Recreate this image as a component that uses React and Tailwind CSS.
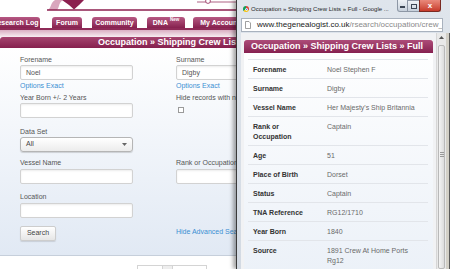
import React from 'react';

const tabs = [
  { label: 'Research Log', cls: 'ml-[-9px] w-[49px]' },
  { label: 'Forum', cls: 'ml-[12px] w-[30px]' },
  { label: 'Community', cls: 'ml-[10px] w-[45px]' },
  { label: 'DNA', sup: 'New', cls: 'ml-[10px] w-[38px]' },
  { label: 'My Account', cls: 'ml-[8px] w-[54px]' },
];

const details = [
  ['Forename', 'Noel Stephen F'],
  ['Surname', 'Digby'],
  ['Vessel Name', "Her Majesty's Ship Britannia"],
  ['Rank or\nOccupation', 'Captain'],
  ['Age', '51'],
  ['Place of Birth', 'Dorset'],
  ['Status', 'Captain'],
  ['TNA Reference', 'RG12/1710'],
  ['Year Born', '1840'],
  ['Source', '1891 Crew At Home Ports\nRg12'],
];

const Label = ({ children, className = '' }) => (
  <div className={`text-[7px] leading-[10px] text-[#555] ${className}`}>{children}</div>
);

const TextBox = ({ value, className = '' }) => (
  <div
    className={`h-[15px] w-[113px] rounded-[2px] border border-[#d2d2d2] bg-white pl-[5px] text-[7px] leading-[13px] text-[#555] shadow-[inset_0_1px_2px_rgba(0,0,0,0.08)] ${className}`}
  >
    {value}
  </div>
);

const LinkText = ({ children }) => (
  <div className="text-[7px] leading-[11px] text-[#3b8fd3]">{children}</div>
);

const SearchPage = () => (
  <div className="w-[450px]">
    {/* logo strip */}
    <div className="h-[17px]">
      <svg width="240" height="17" viewBox="0 0 240 17">
        <path d="M48 10 C52 7 50 3 55 0 L63 0 C58 3 60 7 57 10 Z" fill="#d9a6bd" />
        <path d="M62 0 L84 0 L79 5 L74 9.5 L69 5 Z" fill="#8c1f4f" />
        <line x1="47" y1="10" x2="240" y2="10" stroke="#8c1f4f" strokeWidth="1.4" />
        <line x1="197" y1="2" x2="240" y2="2" stroke="#9b3a66" strokeWidth="0.8" />
        <circle cx="208" cy="1" r="2.4" fill="white" stroke="#9b3a66" strokeWidth="0.9" />
      </svg>
    </div>

    {/* nav tabs */}
    <div className="flex h-[11px]">
      {tabs.map(t => (
        <div
          key={t.label}
          className={`${t.cls} flex shrink-0 items-center justify-center rounded-t-[3px] bg-gradient-to-b from-[#b65883] to-[#86204f] text-[7px] font-bold leading-none whitespace-nowrap text-white`}
        >
          {t.label}
          {t.sup && <span className="mb-[4px] ml-[2px] text-[4.5px]">{t.sup}</span>}
        </div>
      ))}
    </div>
    <div className="h-[2px] bg-[#8e2a57]" />
    <div className="h-[7px] bg-gradient-to-b from-[#d9aec2] to-[#f7eef2]" />
    <div className="h-[11px] rounded-t-[3px] bg-gradient-to-b from-[#a5446f] to-[#86204e] pl-[98px] text-[9px] font-bold leading-[11px] whitespace-nowrap text-white">
      Occupation » Shipping Crew Lists
    </div>

    {/* form */}
    <div className="h-[208px] border-b border-[#c6cfdb] bg-gradient-to-b from-white to-[#e1e9f4] px-[20px] pt-[7px]">
      <div className="flex gap-x-[43px]">
        <div>
          <Label>Forename</Label>
          <TextBox value="Noel" />
          <LinkText>Options Exact</LinkText>
        </div>
        <div>
          <Label>Surname</Label>
          <TextBox value="Digby" />
          <LinkText>Options Exact</LinkText>
        </div>
      </div>
      <div className="mt-[2px] flex gap-x-[43px]">
        <div>
          <Label>Year Born +/- 2 Years</Label>
          <TextBox value="" />
        </div>
        <div>
          <Label className="whitespace-nowrap">Hide records with no date</Label>
          <div className="mt-[4px] ml-[2px] h-[6px] w-[6px] border border-[#9a9a9a] bg-white" />
        </div>
      </div>
      <div className="mt-[9px]">
        <Label>Data Set</Label>
        <div className="flex h-[15px] w-[113px] items-center justify-between rounded-[3px] border border-[#b5b5b5] bg-gradient-to-b from-white to-[#ececec] px-[5px] text-[7px] text-[#444] shadow-[0_1px_1px_rgba(0,0,0,0.15)]">
          <span>All</span>
          <svg width="5" height="3" viewBox="0 0 5 3">
            <path d="M0 0 L5 0 L2.5 3 Z" fill="#666" />
          </svg>
        </div>
      </div>
      <div className="mt-[6px] flex gap-x-[43px]">
        <div>
          <Label>Vessel Name</Label>
          <TextBox value="" className="mt-[1px]" />
        </div>
        <div>
          <Label className="whitespace-nowrap">Rank or Occupation</Label>
          <TextBox value="" className="mt-[1px]" />
        </div>
      </div>
      <div className="mt-[8px]">
        <Label>Location</Label>
        <TextBox value="" className="mt-[1px] h-[14px]" />
      </div>
      <div className="mt-[8px] flex items-start gap-x-[43px]">
        <div className="w-[113px]">
          <div className="flex h-[15px] w-[36px] items-center justify-center rounded-[2px] border border-[#cdcdcd] bg-gradient-to-b from-white to-[#e6e6e6] text-[7px] text-[#444] shadow-[0_1px_1px_rgba(0,0,0,0.12)]">
            Search
          </div>
        </div>
        <div className="pt-[1px] text-[7px] leading-[10px] whitespace-nowrap text-[#3b8fd3]">Hide Advanced Search</div>
      </div>
    </div>

    {/* pagination peek */}
    <div className="ml-[137px] mt-[9px] flex h-[10px]">
      <div className="w-[26px] border border-[#d4d4d4] bg-white" />
      <div className="w-[9px] border-y border-[#d4d4d4] bg-[#eeeeee]" />
      <div className="w-[35px] border border-[#d4d4d4] bg-white" />
    </div>
  </div>
);

const PopupWindow = () => (
  <div className="absolute top-0 left-[236px] flex h-[269px] w-[214px] flex-col border-l border-[#3a3a3a] bg-gradient-to-b from-[#dfe5ec] to-[#d3dae3] shadow-[-3px_0_4px_rgba(0,0,0,0.35)]">
    {/* title bar */}
    <div className="relative h-[18px]">
      <div className="absolute top-[6px] left-[6px] h-[6px] w-[6px] rounded-full bg-[conic-gradient(#db4437_0_33%,#f4c20d_33%_66%,#0f9d58_66%_100%)]">
        <div className="m-[1.5px] h-[3px] w-[3px] rounded-full border-[0.5px] border-white bg-[#4285f4]" />
      </div>
      <div className="absolute top-[5px] left-[14px] text-[6px] leading-[8px] whitespace-nowrap text-[#1e1e1e]">
        Occupation » Shipping Crew Lists » Full - Google ...
      </div>
      <div className="absolute top-0 left-[160px] flex h-[12px]">
        <div className="flex w-[11px] items-center justify-center rounded-bl-[3px] border border-t-0 border-[#8d97a5] bg-gradient-to-b from-[#eef2f6] to-[#c7d0db]">
          <div className="mt-[3px] h-[1.5px] w-[5px] bg-[#3c4654]" />
        </div>
        <div className="flex w-[11px] items-center justify-center border-y border-b border-[#8d97a5] bg-gradient-to-b from-[#eef2f6] to-[#c7d0db]">
          <div className="h-[5px] w-[6px] border border-[#3c4654]" />
        </div>
        <div className="flex w-[22px] items-center justify-center rounded-br-[3px] border border-t-0 border-[#7a2a22] bg-gradient-to-b from-[#e9897b] to-[#c7392a] text-[8px] leading-none font-bold text-white">
          x
        </div>
      </div>
    </div>

    {/* address bar */}
    <div className="mx-[4px] flex h-[14px] w-[202px] items-center overflow-hidden border border-[#a9b2be] bg-white pl-[3px] text-[8px] leading-none whitespace-nowrap">
      <svg width="6" height="8" viewBox="0 0 6 8" className="mr-[6px] shrink-0">
        <path d="M0.5 0.5 H4 L5.5 2 V7.5 H0.5 Z" fill="white" stroke="#888" strokeWidth="0.8" />
      </svg>
      <span className="text-[#222]">www.thegenealogist.co.uk</span>
      <span className="text-[#8a8a8a]">/rsearch/occupation/crew_list</span>
    </div>

    {/* page content */}
    <div className="mt-[1px] ml-[4px] flex min-h-0 flex-1">
      <div className="w-[196px] bg-[#f1f2f4] pt-[7px] pl-[3px]">
        <div className="h-[300px] w-[189px] bg-gradient-to-b from-white to-[#e6edf6]">
          <div className="h-[13px] rounded-t-[3px] bg-gradient-to-b from-[#ad4c79] to-[#862050] pl-[7px] text-[9px] font-bold leading-[13px] whitespace-nowrap text-white">
            Occupation » Shipping Crew Lists » Full
          </div>
          <div className="pt-[6px] pr-[5px] pl-[4px]">
            {details.map(([label, value]) => (
              <div key={label} className="flex border-t border-[#e2e5ea] pt-[5px] pb-[3px] pl-[5px] text-[7px] leading-[10px]">
                <div className="w-[74px] shrink-0 font-bold whitespace-pre-line text-[#333]">{label}</div>
                <div className="whitespace-pre-line text-[#6a6a6a]">{value}</div>
              </div>
            ))}
          </div>
        </div>
      </div>
      {/* scrollbar */}
      <div className="flex w-[10px] flex-col border-l border-[#d6d6d6] bg-[#e9e9e9]">
        <div className="flex h-[9px] items-center justify-center">
          <svg width="5" height="3" viewBox="0 0 5 3">
            <path d="M0 3 L5 3 L2.5 0 Z" fill="#555" />
          </svg>
        </div>
        <div className="mx-[1px] mt-[3px] flex flex-1 flex-col items-center rounded-[2px] border border-[#b9b9b9] bg-gradient-to-r from-[#f4f4f4] to-[#dcdcdc] pt-[106px]">
          <div className="h-[1px] w-[4px] bg-[#999]" />
          <div className="mt-[1px] h-[1px] w-[4px] bg-[#999]" />
          <div className="mt-[1px] h-[1px] w-[4px] bg-[#999]" />
        </div>
      </div>
      <div className="w-[3px] bg-[#d2cfc6]" />
      <div className="w-[1px] bg-[#5a5a5a]" />
    </div>
  </div>
);

export default function App() {
  return (
    <div className="relative h-[269px] w-[450px] overflow-hidden bg-white font-['Liberation_Sans',Arial,sans-serif]">
      <SearchPage />
      <PopupWindow />
    </div>
  );
}
